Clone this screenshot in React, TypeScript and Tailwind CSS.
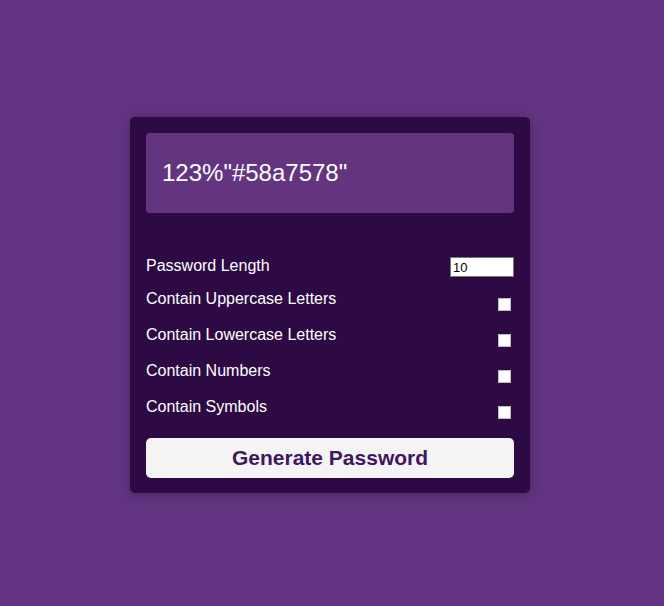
import React from "react";

export default function App() {
  const rows = [
    "Contain Uppercase Letters",
    "Contain Lowercase Letters",
    "Contain Numbers",
    "Contain Symbols",
  ];
  return (
    <div
      className="w-full h-[606px] bg-[#623380] flex justify-center pt-[117px]"
      style={{ fontFamily: '"Liberation Sans", Arial, sans-serif' }}
    >
      <div className="w-[400px] h-fit bg-[#2d0a44] rounded-[5px] px-4 pt-4 pb-[15px] shadow-[0_2px_10px_rgba(0,0,0,0.25)] mr-[4px]">
        <div className="h-20 bg-[#633480] rounded-[4px] flex items-center pl-4 text-white text-[24px]">
          123%"#58a7578"
        </div>
        <div className="mt-[44px] h-5 flex justify-between items-start text-white text-[16px] leading-[18px]">
          <span>Password Length</span>
          <input
            type="number"
            defaultValue={10}
            className="w-16 h-5 bg-white border border-[#767676] text-black text-[13px] px-[2px] outline-none"
          />
        </div>
        <div className="mt-[13px]">
          {rows.map((r) => (
            <div key={r} className="h-9 flex justify-between items-start text-white text-[16px] leading-[18px]">
              <span>{r}</span>
              <input
                type="checkbox"
                className="appearance-none w-[13px] h-[13px] bg-white border border-[#bdbdbd] mt-2 mr-[3px]"
              />
            </div>
          ))}
        </div>
        <button className="mt-1 w-full h-10 bg-[#f4f4f4] rounded-[5px] text-[#40175f] text-[21px] font-bold">
          Generate Password
        </button>
      </div>
    </div>
  );
}
